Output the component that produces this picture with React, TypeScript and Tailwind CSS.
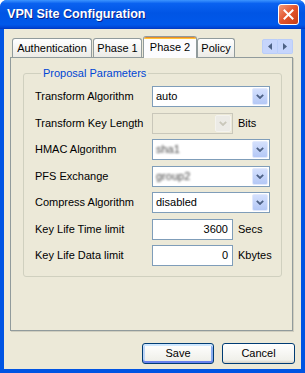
import React from 'react';

const Chevron = ({ disabled }: { disabled?: boolean }) => (
  <svg width="8" height="5" viewBox="0 0 8 5">
    <path d="M0.8 0.8 L4 4 L7.2 0.8" fill="none" stroke={disabled ? '#c9c7ba' : '#4d6185'} strokeWidth="1.8" />
  </svg>
);

const Select = ({ value, blurred, disabled, small }: { value?: string; blurred?: boolean; disabled?: boolean; small?: boolean }) => (
  <div
    className={`flex h-[21px] items-stretch border ${small ? 'w-[81px]' : 'w-[118px]'} ${
      disabled ? 'border-[#c9c7ba] bg-[#ece9d8]' : 'border-[#7f9db9] bg-white'
    }`}
  >
    <div className="flex flex-1 items-center pl-[3px]">
      <span className={blurred ? 'text-[#444] blur-[1px]' : ''}>{value}</span>
    </div>
    <div
      className={`m-[1px] flex w-[16px] items-center justify-center rounded-[2px] border ${
        disabled
          ? 'border-[#f4f3ee] bg-[#ecebe6]'
          : 'border-[#e1e9fd] bg-[linear-gradient(#d4e0fd,#b4c8f6)]'
      }`}
    >
      <Chevron disabled={disabled} />
    </div>
  </div>
);

const NumberBox = ({ value }: { value: string }) => (
  <div className="flex h-[21px] w-[81px] items-center justify-end border border-[#7f9db9] bg-white pr-[4px]">{value}</div>
);

const Row = ({ label, children }: { label: string; children: React.ReactNode }) => (
  <div className="flex h-[21px] items-center">
    <div className="w-[117px]">{label}</div>
    {children}
  </div>
);

const Unit = ({ children }: { children: React.ReactNode }) => <span className="ml-[5px]">{children}</span>;

const tabBase = 'flex h-[19px] items-center justify-center rounded-t-[3px] border border-b-0 border-[#919b9c] bg-[linear-gradient(#ffffff,#ecebe6)]';

export default function App() {
  return (
    <div className="flex h-[373px] w-[305px] flex-col overflow-hidden rounded-t-[7px] bg-[#0054e3] font-['Liberation_Sans',Arial,sans-serif] text-[11px] text-black">
      {/* title bar */}
      <div className="flex h-[29px] shrink-0 items-center justify-between bg-[linear-gradient(180deg,#3d95ff_0%,#0a62f0_12%,#0055e5_45%,#0058ea_85%,#0048d8_94%,#0037c0_100%)] pl-[7px] pr-[6px]">
        <span className="text-[12.6px] font-bold text-white [text-shadow:1px_1px_0_#0a1f8a]">VPN Site Configuration</span>
        <div className="flex h-[21px] w-[21px] items-center justify-center rounded-[3px] border border-white bg-[linear-gradient(135deg,#f29a7a,#e2532c_50%,#c53d17)]">
          <svg width="11" height="11" viewBox="0 0 11 11">
            <path d="M1.5 1.5 L9.5 9.5 M9.5 1.5 L1.5 9.5" stroke="white" strokeWidth="2" strokeLinecap="square" />
          </svg>
        </div>
      </div>

      {/* client */}
      <div className="mx-[4px] mb-[4px] flex flex-1 flex-col bg-[#ece9d8] pl-[6px] pr-[8px] pt-[7px]">
        {/* tabs */}
        <div className="relative z-10 flex h-[21px] items-end pl-[2px]">
          <div className={`${tabBase} w-[80px]`}>Authentication</div>
          <div className={`${tabBase} ml-[1px] w-[49px]`}>Phase 1</div>
          <div className="ml-[1px] flex h-[22px] w-[54px] -mb-[1px] flex-col overflow-hidden rounded-t-[3px] border border-b-0 border-[#919b9c] bg-[#fcfcfe]">
            <div className="h-[1px] bg-[#e68b2c]" />
            <div className="h-[2px] bg-[#ffc73c]" />
            <div className="flex flex-1 items-center justify-center pb-[3px]">Phase 2</div>
          </div>
          <div className={`${tabBase} w-[38px]`}>Policy</div>
          <div className="mb-[3px] ml-auto flex h-[15px] w-[31px] self-end">
            <div className="flex flex-1 items-center justify-center rounded-l-[2px] border border-[#b9cdf9] bg-[#c6d5fc]">
              <svg width="4" height="7" viewBox="0 0 4 7"><path d="M4 0 L0 3.5 L4 7 Z" fill="#4d6185" /></svg>
            </div>
            <div className="flex flex-1 items-center justify-center rounded-r-[2px] border border-l-0 border-[#b9cdf9] bg-[#c6d5fc]">
              <svg width="4" height="7" viewBox="0 0 4 7"><path d="M0 0 L4 3.5 L0 7 Z" fill="#4d6185" /></svg>
            </div>
          </div>
        </div>

        {/* tab page */}
        <div className="flex h-[274px] flex-col border border-[#919b9c] bg-[#ece9d8] shadow-[1px_1px_0_#d0cebf]">
          <fieldset className="ml-[12px] mr-[10px] mt-[9px] rounded-[3px] border border-[#d0d0bf] pb-[10px] pl-[11px]">
            <legend className="ml-[6px] px-[2px] leading-[13px] text-[#0046d5]">Proposal Parameters</legend>
            <div className="mt-[6px] flex flex-col gap-[5.5px]">
              <Row label="Transform Algorithm">
                <Select value="auto" />
              </Row>
              <Row label="Transform Key Length">
                <Select disabled small />
                <Unit>Bits</Unit>
              </Row>
              <Row label="HMAC Algorithm">
                <Select value="sha1" blurred />
              </Row>
              <Row label="PFS Exchange">
                <Select value="group2" blurred />
              </Row>
              <Row label="Compress Algorithm">
                <Select value="disabled" />
              </Row>
              <Row label="Key Life Time limit">
                <NumberBox value="3600" />
                <Unit>Secs</Unit>
              </Row>
              <Row label="Key Life Data limit">
                <NumberBox value="0" />
                <Unit>Kbytes</Unit>
              </Row>
            </div>
          </fieldset>
        </div>

        {/* buttons */}
        <div className="mt-[12px] flex justify-end gap-[8px]">
          <button className="h-[21px] w-[72px] rounded-[3px] border border-[#003c74] bg-[linear-gradient(#ffffff,#f0f0ea_85%,#e3e1d8)] shadow-[inset_0_2px_0_#cee7ff,inset_0_-2px_0_#6982ee,inset_2px_0_0_#bcd4f6,inset_-2px_0_0_#89adf0]">
            Save
          </button>
          <button className="mr-[-2px] h-[21px] w-[73px] rounded-[3px] border border-[#003c74] bg-[linear-gradient(#ffffff,#f0f0ea_85%,#d6d0c5)]">
            Cancel
          </button>
        </div>
      </div>
    </div>
  );
}
